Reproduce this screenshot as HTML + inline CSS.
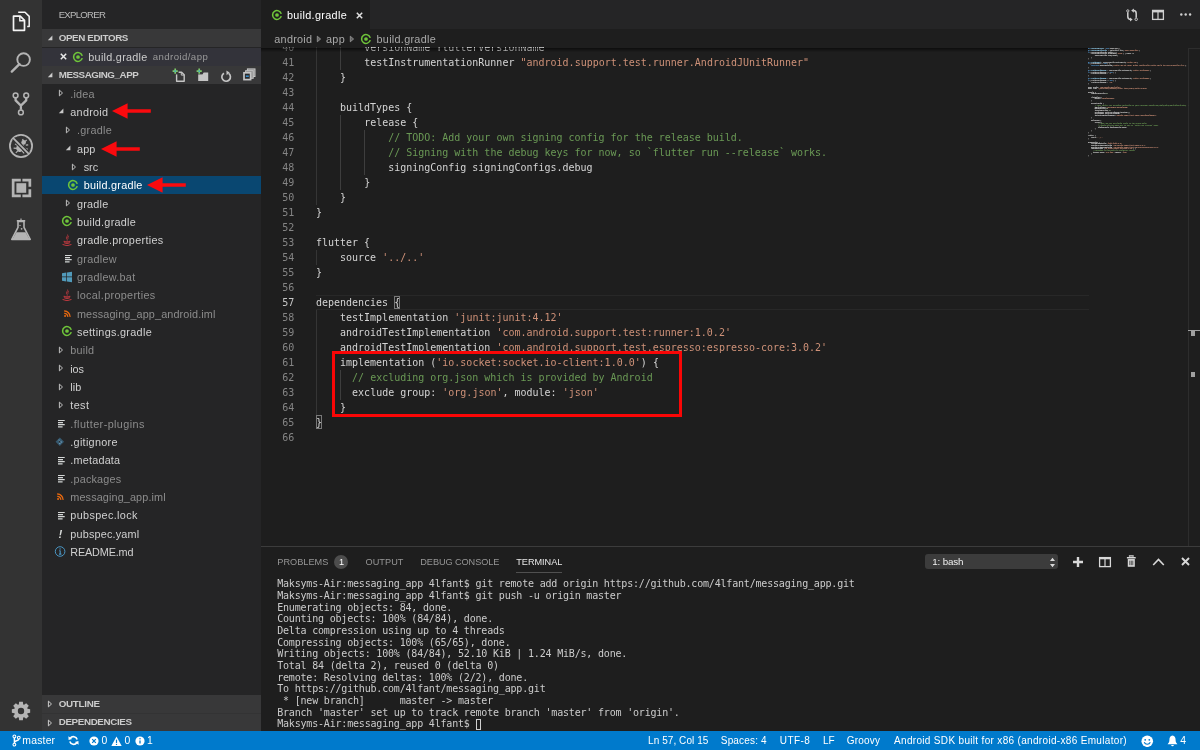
<!DOCTYPE html>
<html lang="en"><head><meta charset="utf-8"><title>build.gradle — messaging_app</title>
<style>
html,body{margin:0;padding:0;}
body{width:1200px;height:750px;overflow:hidden;background:#1e1e1e;position:relative;font-family:"Liberation Sans",sans-serif;}
#r{position:absolute;left:0;top:0;width:1200px;height:750px;overflow:hidden;will-change:transform;}
#r div,#r span,#r svg{position:absolute;}
#r span{white-space:pre;}
.mm{transform-origin:0 0;font-size:10px;line-height:12.04px;white-space:pre;color:#d4d4d4;font-weight:bold;-webkit-text-stroke:0.35px;width:730px;height:800px;overflow:hidden;}
.mm b{font-weight:bold;}
.m{font-family:"DejaVu Sans Mono","Liberation Mono",monospace;}
</style></head>
<body><div id="r">
<div style="left:0.00px;top:0.00px;width:41.67px;height:731.20px;background:#333333;"></div>
<div style="left:41.67px;top:0.00px;width:219.33px;height:731.20px;background:#252526;"></div>
<div style="left:261.00px;top:0.00px;width:939.00px;height:29.17px;background:#252526;"></div>
<div style="left:261.00px;top:0.00px;width:109.00px;height:29.17px;background:#1e1e1e;"></div>
<div style="left:0.00px;top:731.20px;width:1200.00px;height:18.80px;background:#007acc;"></div>
<span id="t1" style="left:58.70px;top:7.30px;line-height:16px;font-size:9.6px;color:#bbbbbb;letter-spacing:-0.719px;">EXPLORER</span>
<div style="left:41.67px;top:29.17px;width:219.33px;height:18.33px;background:#383839;"></div>
<div style="left:41.67px;top:47.50px;width:219.33px;height:18.33px;background:#33333a;"></div>
<div style="left:41.67px;top:65.83px;width:219.33px;height:18.33px;background:#383839;"></div>
<div style="left:41.67px;top:695.00px;width:219.33px;height:18.20px;background:#383839;"></div>
<div style="left:41.67px;top:713.20px;width:219.33px;height:18.00px;background:#383839;"></div>
<div style="left:41.67px;top:713.20px;width:219.33px;height:0.70px;background:#333334;"></div>
<svg style="left:47.00px;top:35.00px;" width="6" height="6" viewBox="0 0 6 6"><path d="M5.4 0.6V5.2H0.8Z" fill="#cccccc"/></svg>
<span id="t2" style="left:58.70px;top:30.30px;line-height:16px;font-size:9.8px;color:#cccccc;font-weight:bold;letter-spacing:-0.380px;">OPEN EDITORS</span>
<svg style="left:47.00px;top:71.60px;" width="6" height="6" viewBox="0 0 6 6"><path d="M5.4 0.6V5.2H0.8Z" fill="#cccccc"/></svg>
<span id="t3" style="left:58.70px;top:66.90px;line-height:16px;font-size:9.8px;color:#cccccc;font-weight:bold;letter-spacing:-0.451px;">MESSAGING_APP</span>
<svg style="left:46.80px;top:700.40px;" width="6" height="8" viewBox="0 0 6 8"><path d="M1.4 1.1L4.5 4L1.4 6.9Z" fill="none" stroke="#cccccc" stroke-width="1" stroke-linejoin="round"/></svg>
<span id="t4" style="left:58.70px;top:696.30px;line-height:16px;font-size:9.8px;color:#cccccc;font-weight:bold;letter-spacing:-0.286px;">OUTLINE</span>
<svg style="left:46.80px;top:718.60px;" width="6" height="8" viewBox="0 0 6 8"><path d="M1.4 1.1L4.5 4L1.4 6.9Z" fill="none" stroke="#cccccc" stroke-width="1" stroke-linejoin="round"/></svg>
<span id="t5" style="left:58.70px;top:714.00px;line-height:16px;font-size:9.8px;color:#cccccc;font-weight:bold;letter-spacing:-0.359px;">DEPENDENCIES</span>
<svg style="left:59.80px;top:53.20px;" width="7" height="7" viewBox="0 0 7 7"><path d="M0.8 0.8L6.2 6.2M6.2 0.8L0.8 6.2" stroke="#e8e8e8" stroke-width="1.5"/></svg>
<svg style="left:72.20px;top:50.60px;" width="12" height="12" viewBox="0 0 12 12"><path d="M10.25 4.86A4.4 4.4 0 1 0 10.25 7.14" fill="none" stroke="#6fc53a" stroke-width="1.55"/><circle cx="6" cy="6" r="1.85" fill="#6fc53a"/></svg>
<span id="t6" style="left:88.30px;top:48.90px;line-height:16px;font-size:10.83px;color:#ccc;letter-spacing:0.276px;">build.gradle</span>
<span id="t7" style="left:152.70px;top:48.90px;line-height:16px;font-size:9.6px;color:#9a9a9a;letter-spacing:0.438px;">android/app</span>
<svg style="left:172.40px;top:67.60px;" width="14" height="14" viewBox="0 0 14 14"><path d="M4.6 4.2H9.6L12.2 6.8V13.2H4.6Z" fill="none" stroke="#c5c5c5" stroke-width="1.4" stroke-linejoin="round"/><path d="M9.3 4.2V7.1H12.2" fill="none" stroke="#c5c5c5" stroke-width="1"/><rect x="0" y="0" width="6.6" height="6.4" fill="#383839"/><path d="M3.2 0.6V5.8M0.6 3.2H5.8" stroke="#7cc96a" stroke-width="1.7"/><rect x="2.5" y="2.5" width="1.4" height="1.4" fill="#3aa0d8"/></svg>
<svg style="left:195.90px;top:67.50px;" width="14" height="14" viewBox="0 0 14 14"><path d="M2.2 6.2H6.6L7.6 4.6H12.2V13H2.2Z" fill="#c5c5c5"/><rect x="0" y="0" width="6.4" height="6.2" fill="#383839"/><path d="M3.2 0.6V5.8M0.6 3.2H5.8" stroke="#7cc96a" stroke-width="1.7"/><rect x="2.5" y="2.5" width="1.4" height="1.4" fill="#3aa0d8"/></svg>
<svg style="left:219.00px;top:68.60px;" width="14" height="14" viewBox="0 0 14 14"><path d="M9.6 4.4A4.3 4.3 0 1 1 5.0 4.2" fill="none" stroke="#c5c5c5" stroke-width="1.7"/><path d="M7.4 1.4L10.6 3.6L7.6 6.2Z" fill="#c5c5c5"/></svg>
<svg style="left:242.20px;top:67.80px;" width="14" height="14" viewBox="0 0 14 14"><rect x="5.4" y="0.9" width="7.6" height="7.6" fill="#8e8e8e" stroke="#c5c5c5" stroke-width="1"/><rect x="3.6" y="2.7" width="7.6" height="7.6" fill="#8e8e8e" stroke="#c5c5c5" stroke-width="1"/><rect x="2.0" y="4.8" width="6.6" height="6.8" fill="#2a2a2b" stroke="#c5c5c5" stroke-width="1.7"/><path d="M3.8 8.2H6.8" stroke="#3aa0ea" stroke-width="1.3"/></svg>
<svg style="left:58.00px;top:89.34px;" width="6" height="8" viewBox="0 0 6 8"><path d="M1.4 1.1L4.5 4L1.4 6.9Z" fill="none" stroke="#c0c0c0" stroke-width="1" stroke-linejoin="round"/></svg>
<span id="t8" style="left:70.30px;top:85.69px;line-height:16px;font-size:10.83px;color:#8c8c8c;letter-spacing:0.203px;">.idea</span>
<svg style="left:58.00px;top:108.47px;" width="6" height="6" viewBox="0 0 6 6"><path d="M5.4 0.6V5.2H0.8Z" fill="#c8c8c8"/></svg>
<span id="t9" style="left:70.30px;top:104.02px;line-height:16px;font-size:10.83px;color:#d0d0d0;letter-spacing:0.268px;">android</span>
<svg style="left:64.67px;top:126.00px;" width="6" height="8" viewBox="0 0 6 8"><path d="M1.4 1.1L4.5 4L1.4 6.9Z" fill="none" stroke="#c0c0c0" stroke-width="1" stroke-linejoin="round"/></svg>
<span id="t10" style="left:76.97px;top:122.35px;line-height:16px;font-size:10.83px;color:#8c8c8c;letter-spacing:0.270px;">.gradle</span>
<svg style="left:64.67px;top:145.14px;" width="6" height="6" viewBox="0 0 6 6"><path d="M5.4 0.6V5.2H0.8Z" fill="#c8c8c8"/></svg>
<span id="t11" style="left:76.97px;top:140.69px;line-height:16px;font-size:10.83px;color:#d0d0d0;letter-spacing:0.141px;">app</span>
<svg style="left:71.33px;top:162.67px;" width="6" height="8" viewBox="0 0 6 8"><path d="M1.4 1.1L4.5 4L1.4 6.9Z" fill="none" stroke="#c0c0c0" stroke-width="1" stroke-linejoin="round"/></svg>
<span id="t12" style="left:83.63px;top:159.02px;line-height:16px;font-size:10.83px;color:#d0d0d0;letter-spacing:0.021px;">src</span>
<div style="left:41.67px;top:175.83px;width:219.33px;height:18.33px;background:#094771;"></div>
<svg style="left:67.33px;top:178.80px;" width="12" height="12" viewBox="0 0 12 12"><path d="M10.25 4.86A4.4 4.4 0 1 0 10.25 7.14" fill="none" stroke="#6fc53a" stroke-width="1.55"/><circle cx="6" cy="6" r="1.85" fill="#6fc53a"/></svg>
<span id="t13" style="left:83.63px;top:177.35px;line-height:16px;font-size:10.83px;color:#ffffff;letter-spacing:0.250px;">build.gradle</span>
<svg style="left:64.67px;top:199.33px;" width="6" height="8" viewBox="0 0 6 8"><path d="M1.4 1.1L4.5 4L1.4 6.9Z" fill="none" stroke="#c0c0c0" stroke-width="1" stroke-linejoin="round"/></svg>
<span id="t14" style="left:76.97px;top:195.68px;line-height:16px;font-size:10.83px;color:#d0d0d0;letter-spacing:0.232px;">gradle</span>
<svg style="left:60.67px;top:215.47px;" width="12" height="12" viewBox="0 0 12 12"><path d="M10.25 4.86A4.4 4.4 0 1 0 10.25 7.14" fill="none" stroke="#6fc53a" stroke-width="1.55"/><circle cx="6" cy="6" r="1.85" fill="#6fc53a"/></svg>
<span id="t15" style="left:76.97px;top:214.02px;line-height:16px;font-size:10.83px;color:#d0d0d0;letter-spacing:0.250px;">build.gradle</span>
<svg style="left:61.07px;top:234.00px;" width="12" height="12" viewBox="0 0 12 12"><path d="M6.6 0.6C7.6 2 4.6 2.9 5.6 4.6C6 5.4 6.6 5.6 6.2 6.6M7.9 2.4C6.4 3.2 6.6 4.2 7.2 4.8" fill="none" stroke="#b5383e" stroke-width="1"/><path d="M3 7.2C4.5 7.9 7.5 7.9 9 7.2M3.4 8.8C4.8 9.4 7.2 9.4 8.6 8.8M2 10.6C4 11.5 8 11.5 10 10.6" fill="none" stroke="#b5383e" stroke-width="1.1" stroke-linecap="round"/></svg>
<span id="t16" style="left:76.97px;top:232.35px;line-height:16px;font-size:10.83px;color:#d0d0d0;letter-spacing:0.308px;">gradle.properties</span>
<svg style="left:61.07px;top:252.33px;" width="12" height="12" viewBox="0 0 12 12"><path d="M4.0 3.5H10.7M4.0 5.6H9.0M4.0 7.7H10.7M4.0 9.8H8.6" stroke="#d4d7d6" stroke-width="1.2" fill="none"/></svg>
<span id="t17" style="left:76.97px;top:250.68px;line-height:16px;font-size:10.83px;color:#8c8c8c;letter-spacing:0.297px;">gradlew</span>
<svg style="left:61.07px;top:270.67px;" width="12" height="12" viewBox="0 0 12 12"><path d="M1 2.2L5.3 1.5V5.6H1ZM6 1.4L11 0.7V5.6H6ZM1 6.3H5.3V10.4L1 9.8ZM6 6.3H11V11.3L6 10.5Z" fill="#519aba"/></svg>
<span id="t18" style="left:76.97px;top:269.02px;line-height:16px;font-size:10.83px;color:#8c8c8c;letter-spacing:0.283px;">gradlew.bat</span>
<svg style="left:61.07px;top:289.00px;" width="12" height="12" viewBox="0 0 12 12"><path d="M6.6 0.6C7.6 2 4.6 2.9 5.6 4.6C6 5.4 6.6 5.6 6.2 6.6M7.9 2.4C6.4 3.2 6.6 4.2 7.2 4.8" fill="none" stroke="#b5383e" stroke-width="1"/><path d="M3 7.2C4.5 7.9 7.5 7.9 9 7.2M3.4 8.8C4.8 9.4 7.2 9.4 8.6 8.8M2 10.6C4 11.5 8 11.5 10 10.6" fill="none" stroke="#b5383e" stroke-width="1.1" stroke-linecap="round"/></svg>
<span id="t19" style="left:76.97px;top:287.35px;line-height:16px;font-size:10.83px;color:#8c8c8c;letter-spacing:0.316px;">local.properties</span>
<svg style="left:62.77px;top:309.73px;" width="8" height="8" viewBox="0 0 12 12"><circle cx="3.1" cy="9" r="1.5" fill="#e8690f"/><path d="M1.8 5.0A5 5 0 0 1 7.1 10.3M1.8 1.6A8.4 8.4 0 0 1 10.6 10.3" fill="none" stroke="#e8690f" stroke-width="2.1"/></svg>
<span id="t20" style="left:76.97px;top:305.68px;line-height:16px;font-size:10.83px;color:#8c8c8c;letter-spacing:0.122px;">messaging_app_android.iml</span>
<svg style="left:60.67px;top:325.47px;" width="12" height="12" viewBox="0 0 12 12"><path d="M10.25 4.86A4.4 4.4 0 1 0 10.25 7.14" fill="none" stroke="#6fc53a" stroke-width="1.55"/><circle cx="6" cy="6" r="1.85" fill="#6fc53a"/></svg>
<span id="t21" style="left:76.97px;top:324.02px;line-height:16px;font-size:10.83px;color:#d0d0d0;letter-spacing:0.304px;">settings.gradle</span>
<svg style="left:58.00px;top:346.00px;" width="6" height="8" viewBox="0 0 6 8"><path d="M1.4 1.1L4.5 4L1.4 6.9Z" fill="none" stroke="#c0c0c0" stroke-width="1" stroke-linejoin="round"/></svg>
<span id="t22" style="left:70.30px;top:342.35px;line-height:16px;font-size:10.83px;color:#8c8c8c;letter-spacing:0.222px;">build</span>
<svg style="left:58.00px;top:364.33px;" width="6" height="8" viewBox="0 0 6 8"><path d="M1.4 1.1L4.5 4L1.4 6.9Z" fill="none" stroke="#c0c0c0" stroke-width="1" stroke-linejoin="round"/></svg>
<span id="t23" style="left:70.30px;top:360.68px;line-height:16px;font-size:10.83px;color:#d0d0d0;letter-spacing:-0.115px;">ios</span>
<svg style="left:58.00px;top:382.66px;" width="6" height="8" viewBox="0 0 6 8"><path d="M1.4 1.1L4.5 4L1.4 6.9Z" fill="none" stroke="#c0c0c0" stroke-width="1" stroke-linejoin="round"/></svg>
<span id="t24" style="left:70.30px;top:379.01px;line-height:16px;font-size:10.83px;color:#d0d0d0;letter-spacing:0.052px;">lib</span>
<svg style="left:58.00px;top:401.00px;" width="6" height="8" viewBox="0 0 6 8"><path d="M1.4 1.1L4.5 4L1.4 6.9Z" fill="none" stroke="#c0c0c0" stroke-width="1" stroke-linejoin="round"/></svg>
<span id="t25" style="left:70.30px;top:397.35px;line-height:16px;font-size:10.83px;color:#d0d0d0;letter-spacing:0.383px;">test</span>
<svg style="left:54.40px;top:417.33px;" width="12" height="12" viewBox="0 0 12 12"><path d="M4.0 3.5H10.7M4.0 5.6H9.0M4.0 7.7H10.7M4.0 9.8H8.6" stroke="#d4d7d6" stroke-width="1.2" fill="none"/></svg>
<span id="t26" style="left:70.30px;top:415.68px;line-height:16px;font-size:10.83px;color:#8c8c8c;letter-spacing:0.405px;">.flutter-plugins</span>
<svg style="left:55.20px;top:436.86px;" width="9.6" height="9.6" viewBox="0 0 12 12"><path d="M6 0.7L11.3 6L6 11.3L0.7 6Z" fill="#36596f"/><path d="M4.2 4.2L7.6 7.6M6 5V8.4" stroke="#252526" stroke-width="0.9"/><circle cx="6" cy="8.2" r="1.0" fill="#6fa0c0"/><circle cx="7.6" cy="6.4" r="1.0" fill="#6fa0c0"/><circle cx="5" cy="3.9" r="0.9" fill="#6fa0c0"/></svg>
<span id="t27" style="left:70.30px;top:434.01px;line-height:16px;font-size:10.83px;color:#d0d0d0;letter-spacing:0.295px;">.gitignore</span>
<svg style="left:54.40px;top:454.00px;" width="12" height="12" viewBox="0 0 12 12"><path d="M4.0 3.5H10.7M4.0 5.6H9.0M4.0 7.7H10.7M4.0 9.8H8.6" stroke="#d4d7d6" stroke-width="1.2" fill="none"/></svg>
<span id="t28" style="left:70.30px;top:452.35px;line-height:16px;font-size:10.83px;color:#d0d0d0;letter-spacing:0.205px;">.metadata</span>
<svg style="left:54.40px;top:472.33px;" width="12" height="12" viewBox="0 0 12 12"><path d="M4.0 3.5H10.7M4.0 5.6H9.0M4.0 7.7H10.7M4.0 9.8H8.6" stroke="#d4d7d6" stroke-width="1.2" fill="none"/></svg>
<span id="t29" style="left:70.30px;top:470.68px;line-height:16px;font-size:10.83px;color:#8c8c8c;letter-spacing:0.181px;">.packages</span>
<svg style="left:56.10px;top:493.06px;" width="8" height="8" viewBox="0 0 12 12"><circle cx="3.1" cy="9" r="1.5" fill="#e8690f"/><path d="M1.8 5.0A5 5 0 0 1 7.1 10.3M1.8 1.6A8.4 8.4 0 0 1 10.6 10.3" fill="none" stroke="#e8690f" stroke-width="2.1"/></svg>
<span id="t30" style="left:70.30px;top:489.01px;line-height:16px;font-size:10.83px;color:#8c8c8c;letter-spacing:0.129px;">messaging_app.iml</span>
<svg style="left:54.40px;top:509.00px;" width="12" height="12" viewBox="0 0 12 12"><path d="M4.0 3.5H10.7M4.0 5.6H9.0M4.0 7.7H10.7M4.0 9.8H8.6" stroke="#d4d7d6" stroke-width="1.2" fill="none"/></svg>
<span id="t31" style="left:70.30px;top:507.35px;line-height:16px;font-size:10.83px;color:#d0d0d0;letter-spacing:0.358px;">pubspec.lock</span>
<span id="t32" style="left:58.40px;top:525.93px;line-height:16px;font-size:11.5px;color:#d4d7d6;font-weight:bold;font-style:italic;">!</span>
<span id="t33" style="left:70.30px;top:525.68px;line-height:16px;font-size:10.83px;color:#d0d0d0;letter-spacing:0.182px;">pubspec.yaml</span>
<svg style="left:53.90px;top:545.16px;" width="13" height="13" viewBox="0 0 13 13"><circle cx="6.1" cy="6.5" r="4.8" fill="none" stroke="#4a96c4" stroke-width="1"/><path d="M6.2 5.6V9.0M5.2 5.7H6.2M5.0 9.1H7.4" stroke="#4a96c4" stroke-width="1.1" fill="none"/><circle cx="6.1" cy="3.9" r="0.7" fill="#4a96c4"/></svg>
<span id="t34" style="left:70.30px;top:544.01px;line-height:16px;font-size:10.83px;color:#d0d0d0;letter-spacing:-0.153px;">README.md</span>
<svg style="left:10.00px;top:9.50px;" width="22" height="23" viewBox="0 0 22 23"><path d="M8.2 2.2H15L19.2 6.4V16.6H17.2" fill="none" stroke="#f4f4f4" stroke-width="1.5" stroke-linejoin="round"/><path d="M3.5 6.1H10.2L14.5 10.4V20.3H3.5Z" fill="none" stroke="#f4f4f4" stroke-width="1.7" stroke-linejoin="round"/><path d="M9.8 6.2V10.7H14.4" fill="none" stroke="#f4f4f4" stroke-width="1.4"/></svg>
<svg style="left:10.00px;top:51.00px;" width="22" height="23" viewBox="0 0 22 23"><circle cx="13.6" cy="8.6" r="6.3" fill="none" stroke="#b4b4b4" stroke-width="1.9"/><path d="M9.4 13.2L1.8 20.6" stroke="#b4b4b4" stroke-width="2.4" stroke-linecap="round"/></svg>
<svg style="left:11.00px;top:91.00px;" width="20" height="26" viewBox="0 0 20 26"><circle cx="4.6" cy="4.4" r="2.4" fill="none" stroke="#b4b4b4" stroke-width="1.5"/><circle cx="15.2" cy="4.4" r="2.4" fill="none" stroke="#b4b4b4" stroke-width="1.5"/><circle cx="9.9" cy="21.4" r="2.4" fill="none" stroke="#b4b4b4" stroke-width="1.5"/><path d="M4.6 7V9.4L9.9 14.6V18.8M15.2 7V9.4L9.9 14.6" fill="none" stroke="#b4b4b4" stroke-width="2.3" stroke-linejoin="round"/></svg>
<svg style="left:8.00px;top:133.00px;" width="26" height="26" viewBox="0 0 26 26"><circle cx="13" cy="13" r="11.1" fill="none" stroke="#b4b4b4" stroke-width="1.8"/><ellipse cx="12.2" cy="14.6" rx="3.7" ry="4.3" fill="#b4b4b4" transform="rotate(28 12.2 14.6)"/><circle cx="15.6" cy="9.4" r="2.3" fill="#b4b4b4"/><path d="M14.6 6L15.4 8M18.6 6.8L17.2 8.6M20.2 11.8L17.8 12.2M19.8 16.4L16.4 15M16.2 20.4L14.2 18M7 10.8L9.6 12.4M5.6 15.2L8.8 15.4M7.8 19.8L9.8 17.8" stroke="#b4b4b4" stroke-width="1.2" fill="none"/><path d="M5.6 5.6L20.4 20.4" stroke="#333333" stroke-width="4.2"/><path d="M5.2 5.2L20.8 20.8" stroke="#b4b4b4" stroke-width="1.8"/></svg>
<svg style="left:10.50px;top:177.50px;" width="21" height="20" viewBox="0 0 21 20"><path d="M9.8 0.8H0.8V19.2H9.8V16.5H3.5V3.5H9.8ZM11.4 0.8H20.2V8.8H17.5V3.5H11.4ZM11.4 19.2H20.2V11.2H17.5V16.5H11.4Z" fill="#b4b4b4"/><rect x="5.4" y="5.2" width="9.8" height="9.6" fill="#b4b4b4"/></svg>
<svg style="left:10.00px;top:217.50px;" width="22" height="24" viewBox="0 0 22 24"><path d="M8 3.4H14V9.4L20.2 21.4H1.8L8 9.4Z" fill="none" stroke="#b4b4b4" stroke-width="1.6" stroke-linejoin="round"/><path d="M6.4 14.2H15.6L19.4 21H2.6Z" fill="#b4b4b4"/><path d="M6.8 2.8H15.2" stroke="#b4b4b4" stroke-width="1.6"/><path d="M11 0.4V2" stroke="#b4b4b4" stroke-width="1.2"/><circle cx="11.6" cy="10.8" r="0.9" fill="#b4b4b4"/><circle cx="10" cy="7.4" r="0.7" fill="#b4b4b4"/></svg>
<svg style="left:9.70px;top:699.80px;" width="22" height="22" viewBox="0 0 22 22"><path fill-rule="evenodd" d="M20.16,9.14 L20.16,12.86 L17.57,13.18 L17.18,14.11 L18.79,16.17 L16.17,18.79 L14.11,17.18 L13.18,17.57 L12.86,20.16 L9.14,20.16 L8.82,17.57 L7.89,17.18 L5.83,18.79 L3.21,16.17 L4.82,14.11 L4.43,13.18 L1.84,12.86 L1.84,9.14 L4.43,8.82 L4.82,7.89 L3.21,5.83 L5.83,3.21 L7.89,4.82 L8.82,4.43 L9.14,1.84 L12.86,1.84 L13.18,4.43 L14.11,4.82 L16.17,3.21 L18.79,5.83 L17.18,7.89 L17.57,8.82Z M14.18,11A3.18,3.18 0 1 0 7.82,11A3.18,3.18 0 1 0 14.18,11Z" fill="#b4b4b4"/></svg>
<div style="left:316.00px;top:294.50px;width:772.70px;height:15.00px;background:transparent;box-sizing:border-box;border-top:1.4px solid #282828;border-bottom:1.4px solid #282828;"></div>
<div style="left:316.25px;top:39.50px;width:0.90px;height:15.00px;background:#353535;"></div>
<div style="left:340.31px;top:39.50px;width:0.90px;height:15.00px;background:#3e3e3e;"></div>
<span id="t35" class="m" style="right:905.70px;top:40.30px;line-height:15px;font-size:10px;color:#858585;">40</span>
<span id="t36" class="m" style="left:364.13px;top:40.30px;line-height:15px;font-size:9.993px;color:#d4d4d4;">versionName flutterVersionName</span>
<div style="left:316.25px;top:54.50px;width:0.90px;height:15.00px;background:#353535;"></div>
<div style="left:340.31px;top:54.50px;width:0.90px;height:15.00px;background:#3e3e3e;"></div>
<span id="t37" class="m" style="right:905.70px;top:55.30px;line-height:15px;font-size:10px;color:#858585;">41</span>
<span id="t38" class="m" style="left:364.13px;top:55.30px;line-height:15px;font-size:9.993px;color:#d4d4d4;">testInstrumentationRunner </span>
<span id="t39" class="m" style="left:520.54px;top:55.30px;line-height:15px;font-size:9.993px;color:#ce9178;">&quot;android.support.test.runner.AndroidJUnitRunner&quot;</span>
<div style="left:316.25px;top:69.50px;width:0.90px;height:15.00px;background:#353535;"></div>
<span id="t40" class="m" style="right:905.70px;top:70.30px;line-height:15px;font-size:10px;color:#858585;">42</span>
<span id="t41" class="m" style="left:340.06px;top:70.30px;line-height:15px;font-size:9.993px;color:#d4d4d4;">}</span>
<div style="left:316.25px;top:84.50px;width:0.90px;height:15.00px;background:#353535;"></div>
<span id="t42" class="m" style="right:905.70px;top:85.30px;line-height:15px;font-size:10px;color:#858585;">43</span>
<div style="left:316.25px;top:99.50px;width:0.90px;height:15.00px;background:#353535;"></div>
<span id="t43" class="m" style="right:905.70px;top:100.30px;line-height:15px;font-size:10px;color:#858585;">44</span>
<span id="t44" class="m" style="left:340.06px;top:100.30px;line-height:15px;font-size:9.993px;color:#d4d4d4;">buildTypes {</span>
<div style="left:316.25px;top:114.50px;width:0.90px;height:15.00px;background:#353535;"></div>
<div style="left:340.31px;top:114.50px;width:0.90px;height:15.00px;background:#3e3e3e;"></div>
<span id="t45" class="m" style="right:905.70px;top:115.30px;line-height:15px;font-size:10px;color:#858585;">45</span>
<span id="t46" class="m" style="left:364.13px;top:115.30px;line-height:15px;font-size:9.993px;color:#d4d4d4;">release {</span>
<div style="left:316.25px;top:129.50px;width:0.90px;height:15.00px;background:#353535;"></div>
<div style="left:340.31px;top:129.50px;width:0.90px;height:15.00px;background:#3e3e3e;"></div>
<div style="left:364.38px;top:129.50px;width:0.90px;height:15.00px;background:#3e3e3e;"></div>
<span id="t47" class="m" style="right:905.70px;top:130.30px;line-height:15px;font-size:10px;color:#858585;">46</span>
<span id="t48" class="m" style="left:388.19px;top:130.30px;line-height:15px;font-size:9.993px;color:#6a9955;">// TODO: Add your own signing config for the release build.</span>
<div style="left:316.25px;top:144.50px;width:0.90px;height:15.00px;background:#353535;"></div>
<div style="left:340.31px;top:144.50px;width:0.90px;height:15.00px;background:#3e3e3e;"></div>
<div style="left:364.38px;top:144.50px;width:0.90px;height:15.00px;background:#3e3e3e;"></div>
<span id="t49" class="m" style="right:905.70px;top:145.30px;line-height:15px;font-size:10px;color:#858585;">47</span>
<span id="t50" class="m" style="left:388.19px;top:145.30px;line-height:15px;font-size:9.993px;color:#6a9955;">// Signing with the debug keys for now, so `flutter run --release` works.</span>
<div style="left:316.25px;top:159.50px;width:0.90px;height:15.00px;background:#353535;"></div>
<div style="left:340.31px;top:159.50px;width:0.90px;height:15.00px;background:#3e3e3e;"></div>
<div style="left:364.38px;top:159.50px;width:0.90px;height:15.00px;background:#3e3e3e;"></div>
<span id="t51" class="m" style="right:905.70px;top:160.30px;line-height:15px;font-size:10px;color:#858585;">48</span>
<span id="t52" class="m" style="left:388.19px;top:160.30px;line-height:15px;font-size:9.993px;color:#d4d4d4;">signingConfig signingConfigs.debug</span>
<div style="left:316.25px;top:174.50px;width:0.90px;height:15.00px;background:#353535;"></div>
<div style="left:340.31px;top:174.50px;width:0.90px;height:15.00px;background:#3e3e3e;"></div>
<span id="t53" class="m" style="right:905.70px;top:175.30px;line-height:15px;font-size:10px;color:#858585;">49</span>
<span id="t54" class="m" style="left:364.13px;top:175.30px;line-height:15px;font-size:9.993px;color:#d4d4d4;">}</span>
<div style="left:316.25px;top:189.50px;width:0.90px;height:15.00px;background:#353535;"></div>
<span id="t55" class="m" style="right:905.70px;top:190.30px;line-height:15px;font-size:10px;color:#858585;">50</span>
<span id="t56" class="m" style="left:340.06px;top:190.30px;line-height:15px;font-size:9.993px;color:#d4d4d4;">}</span>
<span id="t57" class="m" style="right:905.70px;top:205.30px;line-height:15px;font-size:10px;color:#858585;">51</span>
<span id="t58" class="m" style="left:316.00px;top:205.30px;line-height:15px;font-size:9.993px;color:#d4d4d4;">}</span>
<span id="t59" class="m" style="right:905.70px;top:220.30px;line-height:15px;font-size:10px;color:#858585;">52</span>
<span id="t60" class="m" style="right:905.70px;top:235.30px;line-height:15px;font-size:10px;color:#858585;">53</span>
<span id="t61" class="m" style="left:316.00px;top:235.30px;line-height:15px;font-size:9.993px;color:#d4d4d4;">flutter {</span>
<div style="left:316.25px;top:249.50px;width:0.90px;height:15.00px;background:#353535;"></div>
<span id="t62" class="m" style="right:905.70px;top:250.30px;line-height:15px;font-size:10px;color:#858585;">54</span>
<span id="t63" class="m" style="left:340.06px;top:250.30px;line-height:15px;font-size:9.993px;color:#d4d4d4;">source </span>
<span id="t64" class="m" style="left:382.18px;top:250.30px;line-height:15px;font-size:9.993px;color:#ce9178;">&#x27;../..&#x27;</span>
<span id="t65" class="m" style="right:905.70px;top:265.30px;line-height:15px;font-size:10px;color:#858585;">55</span>
<span id="t66" class="m" style="left:316.00px;top:265.30px;line-height:15px;font-size:9.993px;color:#d4d4d4;">}</span>
<span id="t67" class="m" style="right:905.70px;top:280.30px;line-height:15px;font-size:10px;color:#858585;">56</span>
<span id="t68" class="m" style="right:905.70px;top:295.30px;line-height:15px;font-size:10px;color:#c6c6c6;">57</span>
<span id="t69" class="m" style="left:316.00px;top:295.30px;line-height:15px;font-size:9.993px;color:#d4d4d4;">dependencies {</span>
<div style="left:316.25px;top:309.50px;width:0.90px;height:15.00px;background:#353535;"></div>
<span id="t70" class="m" style="right:905.70px;top:310.30px;line-height:15px;font-size:10px;color:#858585;">58</span>
<span id="t71" class="m" style="left:340.06px;top:310.30px;line-height:15px;font-size:9.993px;color:#d4d4d4;">testImplementation </span>
<span id="t72" class="m" style="left:454.37px;top:310.30px;line-height:15px;font-size:9.993px;color:#ce9178;">&#x27;junit:junit:4.12&#x27;</span>
<div style="left:316.25px;top:324.50px;width:0.90px;height:15.00px;background:#353535;"></div>
<span id="t73" class="m" style="right:905.70px;top:325.30px;line-height:15px;font-size:10px;color:#858585;">59</span>
<span id="t74" class="m" style="left:340.06px;top:325.30px;line-height:15px;font-size:9.993px;color:#d4d4d4;">androidTestImplementation </span>
<span id="t75" class="m" style="left:496.48px;top:325.30px;line-height:15px;font-size:9.993px;color:#ce9178;">&#x27;com.android.support.test:runner:1.0.2&#x27;</span>
<div style="left:316.25px;top:339.50px;width:0.90px;height:15.00px;background:#353535;"></div>
<span id="t76" class="m" style="right:905.70px;top:340.30px;line-height:15px;font-size:10px;color:#858585;">60</span>
<span id="t77" class="m" style="left:340.06px;top:340.30px;line-height:15px;font-size:9.993px;color:#d4d4d4;">androidTestImplementation </span>
<span id="t78" class="m" style="left:496.48px;top:340.30px;line-height:15px;font-size:9.993px;color:#ce9178;">&#x27;com.android.support.test.espresso:espresso-core:3.0.2&#x27;</span>
<div style="left:316.25px;top:354.50px;width:0.90px;height:15.00px;background:#353535;"></div>
<span id="t79" class="m" style="right:905.70px;top:355.30px;line-height:15px;font-size:10px;color:#858585;">61</span>
<span id="t80" class="m" style="left:340.06px;top:355.30px;line-height:15px;font-size:9.993px;color:#d4d4d4;">implementation (</span>
<span id="t81" class="m" style="left:436.32px;top:355.30px;line-height:15px;font-size:9.993px;color:#ce9178;">&#x27;io.socket:socket.io-client:1.0.0&#x27;</span>
<span id="t82" class="m" style="left:640.86px;top:355.30px;line-height:15px;font-size:9.993px;color:#d4d4d4;">) {</span>
<div style="left:316.25px;top:369.50px;width:0.90px;height:15.00px;background:#353535;"></div>
<div style="left:340.31px;top:369.50px;width:0.90px;height:15.00px;background:#3e3e3e;"></div>
<span id="t83" class="m" style="right:905.70px;top:370.30px;line-height:15px;font-size:10px;color:#858585;">62</span>
<span id="t84" class="m" style="left:352.10px;top:370.30px;line-height:15px;font-size:9.993px;color:#6a9955;">// excluding org.json which is provided by Android</span>
<div style="left:316.25px;top:384.50px;width:0.90px;height:15.00px;background:#353535;"></div>
<div style="left:340.31px;top:384.50px;width:0.90px;height:15.00px;background:#3e3e3e;"></div>
<span id="t85" class="m" style="right:905.70px;top:385.30px;line-height:15px;font-size:10px;color:#858585;">63</span>
<span id="t86" class="m" style="left:352.10px;top:385.30px;line-height:15px;font-size:9.993px;color:#d4d4d4;">exclude group: </span>
<span id="t87" class="m" style="left:442.34px;top:385.30px;line-height:15px;font-size:9.993px;color:#ce9178;">&#x27;org.json&#x27;</span>
<span id="t88" class="m" style="left:502.50px;top:385.30px;line-height:15px;font-size:9.993px;color:#d4d4d4;">, module: </span>
<span id="t89" class="m" style="left:562.66px;top:385.30px;line-height:15px;font-size:9.993px;color:#ce9178;">&#x27;json&#x27;</span>
<div style="left:316.25px;top:399.50px;width:0.90px;height:15.00px;background:#353535;"></div>
<span id="t90" class="m" style="right:905.70px;top:400.30px;line-height:15px;font-size:10px;color:#858585;">64</span>
<span id="t91" class="m" style="left:340.06px;top:400.30px;line-height:15px;font-size:9.993px;color:#d4d4d4;">}</span>
<span id="t92" class="m" style="right:905.70px;top:415.30px;line-height:15px;font-size:10px;color:#858585;">65</span>
<span id="t93" class="m" style="left:316.00px;top:415.30px;line-height:15px;font-size:9.993px;color:#d4d4d4;">}</span>
<span id="t94" class="m" style="right:905.70px;top:430.30px;line-height:15px;font-size:10px;color:#858585;">66</span>
<div style="left:394.21px;top:295.90px;width:6.02px;height:13.40px;background:transparent;box-sizing:border-box;border:0.9px solid #787878;"></div>
<div style="left:316.00px;top:415.10px;width:6.02px;height:14.20px;background:transparent;box-sizing:border-box;border:0.9px solid #787878;"></div>
<div style="left:331.80px;top:351.30px;width:350.10px;height:65.40px;background:transparent;box-sizing:border-box;border:3.7px solid #fa0606;"></div>
<div style="left:261.00px;top:29.17px;width:939.00px;height:18.33px;background:#1e1e1e;"></div>
<div style="left:261.00px;top:47.50px;width:827.50px;height:4.50px;background:linear-gradient(rgba(0,0,0,0.55),rgba(0,0,0,0));"></div>
<div style="left:1188.20px;top:47.50px;width:0.80px;height:498.90px;background:#2d2d2d;"></div>
<div style="left:1188.20px;top:47.50px;width:12.00px;height:0.80px;background:#2d2d2d;"></div>
<div style="left:1188.20px;top:329.60px;width:12.00px;height:1.20px;background:#a0a0a0;"></div>
<div style="left:1190.60px;top:330.60px;width:4.20px;height:5.60px;background:#a0a0a0;"></div>
<div style="left:1190.60px;top:371.60px;width:4.20px;height:5.40px;background:#a0a0a0;"></div>
<svg style="left:271.00px;top:8.80px;" width="12" height="12" viewBox="0 0 12 12"><path d="M10.25 4.86A4.4 4.4 0 1 0 10.25 7.14" fill="none" stroke="#6fc53a" stroke-width="1.55"/><circle cx="6" cy="6" r="1.85" fill="#6fc53a"/></svg>
<span id="t95" style="left:287.00px;top:7.00px;line-height:16px;font-size:10.83px;color:#ffffff;letter-spacing:0.333px;">build.gradle</span>
<svg style="left:355.50px;top:11.50px;" width="7" height="7" viewBox="0 0 7 7"><path d="M0.8 0.8L6.2 6.2M6.2 0.8L0.8 6.2" stroke="#e0e0e0" stroke-width="1.5"/></svg>
<span id="t96" style="left:274.30px;top:31.20px;line-height:16px;font-size:10.83px;color:#a9a9a9;letter-spacing:0.268px;">android</span>
<svg style="left:316.30px;top:35.40px;" width="6" height="8" viewBox="0 0 6 8"><path d="M1.3 1.2L4.6 4L1.3 6.8Z" fill="#9a9a9a" fill-opacity="0.55" stroke="#9a9a9a" stroke-width="0.8" stroke-linejoin="round"/></svg>
<span id="t97" style="left:326.00px;top:31.20px;line-height:16px;font-size:10.83px;color:#a9a9a9;letter-spacing:0.307px;">app</span>
<svg style="left:349.00px;top:35.40px;" width="6" height="8" viewBox="0 0 6 8"><path d="M1.3 1.2L4.6 4L1.3 6.8Z" fill="#9a9a9a" fill-opacity="0.55" stroke="#9a9a9a" stroke-width="0.8" stroke-linejoin="round"/></svg>
<svg style="left:360.40px;top:32.80px;" width="12" height="12" viewBox="0 0 12 12"><path d="M10.25 4.86A4.4 4.4 0 1 0 10.25 7.14" fill="none" stroke="#6fc53a" stroke-width="1.55"/><circle cx="6" cy="6" r="1.85" fill="#6fc53a"/></svg>
<span id="t98" style="left:376.50px;top:31.20px;line-height:16px;font-size:10.83px;color:#a9a9a9;letter-spacing:0.292px;">build.gradle</span>
<svg style="left:1124.60px;top:7.60px;" width="14" height="14" viewBox="0 0 14 14"><circle cx="2.8" cy="2.9" r="1.15" fill="none" stroke="#d0d0d0" stroke-width="0.9"/><circle cx="11.2" cy="11.3" r="1.25" fill="none" stroke="#d0d0d0" stroke-width="0.9"/><path d="M2.8 4.2V8.6Q2.8 11.2 5.2 11.4" fill="none" stroke="#d0d0d0" stroke-width="1.5"/><path d="M5 9.4L7.6 11.5L5 13.6Z" fill="#d0d0d0"/><path d="M11.2 9.8V5.6Q11.2 2.6 8.6 2.6" fill="none" stroke="#d0d0d0" stroke-width="1.5"/><path d="M8.9 0.5L6.2 2.6L8.9 4.7Z" fill="#d0d0d0"/></svg>
<svg style="left:1151.00px;top:8.00px;" width="14" height="14" viewBox="0 0 14 14"><rect x="1.6" y="2.4" width="10.8" height="9" fill="none" stroke="#d0d0d0" stroke-width="1.3"/><path d="M1.6 3.4H12.4" stroke="#d0d0d0" stroke-width="2"/><path d="M7 3V11.4" stroke="#d0d0d0" stroke-width="1.2"/></svg>
<svg style="left:1178.80px;top:12.00px;" width="14" height="5" viewBox="0 0 14 5"><circle cx="2.3" cy="2.5" r="1.2" fill="#d0d0d0"/><circle cx="6.7" cy="2.5" r="1.2" fill="#d0d0d0"/><circle cx="11.1" cy="2.5" r="1.2" fill="#d0d0d0"/></svg>
<svg style="left:111.30px;top:102.00px" width="42" height="18" viewBox="0 0 42 18"><path d="M1 9L16.6 1.2999999999999998V7.2H39.8V10.8H16.6V16.7Z" fill="#fa0a0e"/></svg>
<svg style="left:100.20px;top:140.00px" width="42" height="18" viewBox="0 0 42 18"><path d="M1 9L16.6 1.2999999999999998V7.2H39.8V10.8H16.6V16.7Z" fill="#fa0a0e"/></svg>
<svg style="left:145.80px;top:176.00px" width="42" height="18" viewBox="0 0 42 18"><path d="M1 9L16.6 1.2999999999999998V7.2H39.8V10.8H16.6V16.7Z" fill="#fa0a0e"/></svg>
<div style="left:261.00px;top:545.90px;width:939.00px;height:1.00px;background:#3c3c3c;"></div>
<span id="t99" style="left:277.30px;top:554.00px;line-height:16px;font-size:9.17px;color:#969696;letter-spacing:0.014px;">PROBLEMS</span>
<div style="left:334.30px;top:555.30px;width:13.40px;height:13.40px;background:#4d4d4d;border-radius:7px;"></div>
<span id="t100" style="left:339.00px;top:554.20px;line-height:16px;font-size:9.2px;color:#ffffff;">1</span>
<span id="t101" style="left:365.50px;top:554.00px;line-height:16px;font-size:9.17px;color:#969696;letter-spacing:0.060px;">OUTPUT</span>
<span id="t102" style="left:420.30px;top:554.00px;line-height:16px;font-size:9.17px;color:#969696;letter-spacing:-0.069px;">DEBUG CONSOLE</span>
<span id="t103" style="left:516.30px;top:554.00px;line-height:16px;font-size:9.17px;color:#e7e7e7;letter-spacing:-0.037px;">TERMINAL</span>
<div style="left:516.30px;top:571.90px;width:46.00px;height:0.90px;background:#505050;"></div>
<div style="left:925.30px;top:554.40px;width:133.00px;height:14.50px;background:#3c3c3c;border-radius:3px;"></div>
<span id="t104" style="left:932.30px;top:554.00px;line-height:16px;font-size:9.8px;color:#f0f0f0;letter-spacing:-0.163px;">1: bash</span>
<svg style="left:1048.50px;top:556.60px;" width="7" height="11" viewBox="0 0 7 11"><path d="M3.5 0.8L6 4H1ZM3.5 10.2L6 7H1Z" fill="#d8d8d8"/></svg>
<svg style="left:1072.00px;top:555.90px;" width="12" height="12" viewBox="0 0 12 12"><path d="M6 1V11M1 6H11" stroke="#d8d8d8" stroke-width="2.4"/></svg>
<svg style="left:1098.00px;top:555.90px;" width="14" height="12" viewBox="0 0 14 12"><rect x="1.6" y="1.6" width="10.8" height="9" fill="none" stroke="#d8d8d8" stroke-width="1.3"/><path d="M1.6 2.4H12.4" stroke="#d8d8d8" stroke-width="1.8"/><path d="M7 2V10.4" stroke="#d8d8d8" stroke-width="1.2"/></svg>
<svg style="left:1125.60px;top:555.40px;" width="10.6" height="13.2" viewBox="0 0 12 15"><path d="M4 2V0.9H8V2M1 3.1H11" stroke="#d8d8d8" stroke-width="1.5" fill="none"/><path d="M2 4.6H10V13.4H2Z" fill="#d8d8d8"/><path d="M4.3 6.4V11.6M6 6.4V11.6M7.7 6.4V11.6" stroke="#1e1e1e" stroke-width="0.8"/></svg>
<svg style="left:1151.50px;top:556.80px;" width="13" height="10" viewBox="0 0 13 10"><path d="M1.2 8L6.5 2.4L11.8 8" fill="none" stroke="#d8d8d8" stroke-width="1.6"/></svg>
<svg style="left:1180.50px;top:557.30px;" width="9" height="9" viewBox="0 0 9 9"><path d="M1 1L8 8M8 1L1 8" stroke="#d8d8d8" stroke-width="1.9"/></svg>
<span id="t105" class="m" style="left:277.20px;top:578.33px;line-height:12px;font-size:10px;color:#cccccc;letter-spacing:-0.1872px;">Maksyms-Air:messaging_app 4lfant$ git remote add origin https://github.com/4lfant/messaging_app.git</span>
<span id="t106" class="m" style="left:277.20px;top:590.00px;line-height:12px;font-size:10px;color:#cccccc;letter-spacing:-0.1872px;">Maksyms-Air:messaging_app 4lfant$ git push -u origin master</span>
<span id="t107" class="m" style="left:277.20px;top:601.67px;line-height:12px;font-size:10px;color:#cccccc;letter-spacing:-0.1872px;">Enumerating objects: 84, done.</span>
<span id="t108" class="m" style="left:277.20px;top:613.33px;line-height:12px;font-size:10px;color:#cccccc;letter-spacing:-0.1872px;">Counting objects: 100% (84/84), done.</span>
<span id="t109" class="m" style="left:277.20px;top:625.00px;line-height:12px;font-size:10px;color:#cccccc;letter-spacing:-0.1872px;">Delta compression using up to 4 threads</span>
<span id="t110" class="m" style="left:277.20px;top:636.67px;line-height:12px;font-size:10px;color:#cccccc;letter-spacing:-0.1872px;">Compressing objects: 100% (65/65), done.</span>
<span id="t111" class="m" style="left:277.20px;top:648.33px;line-height:12px;font-size:10px;color:#cccccc;letter-spacing:-0.1872px;">Writing objects: 100% (84/84), 52.10 KiB | 1.24 MiB/s, done.</span>
<span id="t112" class="m" style="left:277.20px;top:660.00px;line-height:12px;font-size:10px;color:#cccccc;letter-spacing:-0.1872px;">Total 84 (delta 2), reused 0 (delta 0)</span>
<span id="t113" class="m" style="left:277.20px;top:671.67px;line-height:12px;font-size:10px;color:#cccccc;letter-spacing:-0.1872px;">remote: Resolving deltas: 100% (2/2), done.</span>
<span id="t114" class="m" style="left:277.20px;top:683.33px;line-height:12px;font-size:10px;color:#cccccc;letter-spacing:-0.1872px;">To https://github.com/4lfant/messaging_app.git</span>
<span id="t115" class="m" style="left:277.20px;top:695.00px;line-height:12px;font-size:10px;color:#cccccc;letter-spacing:-0.1872px;"> * [new branch]      master -&gt; master</span>
<span id="t116" class="m" style="left:277.20px;top:706.67px;line-height:12px;font-size:10px;color:#cccccc;letter-spacing:-0.1872px;">Branch &#x27;master&#x27; set up to track remote branch &#x27;master&#x27; from &#x27;origin&#x27;.</span>
<span id="t117" class="m" style="left:277.20px;top:718.33px;line-height:12px;font-size:10px;color:#cccccc;letter-spacing:-0.1872px;">Maksyms-Air:messaging_app 4lfant$ </span>
<div style="left:475.83px;top:718.50px;width:5.23px;height:11.07px;background:transparent;box-sizing:border-box;border:0.9px solid #d0d0d0;"></div>
<svg style="left:11.60px;top:734.30px;" width="9" height="13" viewBox="0 0 9 13"><circle cx="2.4" cy="2.4" r="1.4" fill="none" stroke="#ffffff" stroke-width="1.1"/><circle cx="2.4" cy="10.6" r="1.4" fill="none" stroke="#ffffff" stroke-width="1.1"/><circle cx="6.8" cy="3.6" r="1.4" fill="none" stroke="#ffffff" stroke-width="1.1"/><path d="M2.4 3.8V9.2M6.8 5C6.8 7.2 2.6 6.4 2.4 8.6" fill="none" stroke="#ffffff" stroke-width="1.5"/></svg>
<span id="t118" style="left:22.30px;top:732.90px;line-height:16px;font-size:10.4px;color:#ffffff;letter-spacing:0.206px;">master</span>
<svg style="left:67.50px;top:734.80px;" width="11" height="11" viewBox="0 0 11 11"><path d="M9.2 4.4A4 4 0 0 0 2.2 3.2M1.8 6.6A4 4 0 0 0 8.8 7.8" fill="none" stroke="#ffffff" stroke-width="1.6"/><path d="M0.4 1.2L0.6 5L4.2 3.9ZM10.6 9.8L10.4 6L6.8 7.1Z" fill="#ffffff"/></svg>
<svg style="left:88.50px;top:736.00px;" width="10" height="10" viewBox="0 0 10 10"><circle cx="5" cy="5" r="4.6" fill="#ffffff"/><path d="M3.2 3.2L6.8 6.8M6.8 3.2L3.2 6.8" stroke="#007acc" stroke-width="1.2"/></svg>
<span id="t119" style="left:101.50px;top:732.90px;line-height:16px;font-size:10.4px;color:#ffffff;">0</span>
<svg style="left:111.00px;top:735.50px;" width="11" height="10.5" viewBox="0 0 11 10.5"><path d="M5.5 0.5L10.7 10H0.3Z" fill="#ffffff"/><path d="M5.5 3.6V7" stroke="#007acc" stroke-width="1.2"/><circle cx="5.5" cy="8.4" r="0.7" fill="#007acc"/></svg>
<span id="t120" style="left:124.50px;top:732.90px;line-height:16px;font-size:10.4px;color:#ffffff;">0</span>
<svg style="left:134.50px;top:736.00px;" width="10" height="10" viewBox="0 0 10 10"><circle cx="5" cy="5" r="4.6" fill="#ffffff"/><path d="M5 4.4V7.6" stroke="#007acc" stroke-width="1.3"/><circle cx="5" cy="2.8" r="0.75" fill="#007acc"/></svg>
<span id="t121" style="left:147.00px;top:732.90px;line-height:16px;font-size:10.4px;color:#ffffff;">1</span>
<span id="t122" style="left:648.00px;top:732.90px;line-height:16px;font-size:10px;color:#ffffff;letter-spacing:0.077px;">Ln 57, Col 15</span>
<span id="t123" style="left:720.80px;top:732.90px;line-height:16px;font-size:10px;color:#ffffff;letter-spacing:0.168px;">Spaces: 4</span>
<span id="t124" style="left:779.80px;top:732.90px;line-height:16px;font-size:10px;color:#ffffff;letter-spacing:0.431px;">UTF-8</span>
<span id="t125" style="left:823.00px;top:732.90px;line-height:16px;font-size:10px;color:#ffffff;letter-spacing:-0.086px;">LF</span>
<span id="t126" style="left:846.70px;top:732.90px;line-height:16px;font-size:10px;color:#ffffff;letter-spacing:0.211px;">Groovy</span>
<span id="t127" style="left:894.00px;top:732.90px;line-height:16px;font-size:10px;color:#ffffff;letter-spacing:0.326px;">Android SDK built for x86 (android-x86 Emulator)</span>
<svg style="left:1141.00px;top:734.80px;" width="12.5" height="12.5" viewBox="0 0 12.5 12.5"><circle cx="6.25" cy="6.25" r="5.8" fill="#ffffff"/><circle cx="4.2" cy="4.8" r="0.9" fill="#007acc"/><circle cx="8.3" cy="4.8" r="0.9" fill="#007acc"/><path d="M3.2 7.2A3.3 3.3 0 0 0 9.3 7.2" fill="none" stroke="#007acc" stroke-width="1.1"/></svg>
<svg style="left:1166.50px;top:735.00px;" width="11" height="12" viewBox="0 0 11 12"><path d="M5.5 0.6C3.2 0.8 2.4 2.8 2.4 5C2.4 7.4 1.6 8 0.6 9.2H10.4C9.4 8 8.6 7.4 8.6 5C8.6 2.8 7.8 0.8 5.5 0.6Z" fill="#ffffff"/><path d="M4.2 10H6.8A1.3 1.3 0 0 1 4.2 10Z" fill="#ffffff"/></svg>
<span id="t128" style="left:1180.30px;top:732.90px;line-height:16px;font-size:10.4px;color:#ffffff;">4</span>
<div class="m mm" style="left:1088.4px;top:47.7px;transform:scale(0.13841);"><b style="color:#569cd6">def</b><b style="color:#9cdcfe"> localProperties</b> = <b style="color:#569cd6">new</b> Properties()
<b style="color:#569cd6">def</b><b style="color:#9cdcfe"> localPropertiesFile</b> = rootProject.file(<b style="color:#ce9178">&#x27;local.properties&#x27;</b>)
<b style="color:#569cd6">if</b> (localPropertiesFile.exists()) {
    localPropertiesFile.withReader(<b style="color:#ce9178">&#x27;UTF-8&#x27;</b>) { reader -&gt;
        localProperties.load(reader)
    }
}

<b style="color:#569cd6">def</b><b style="color:#9cdcfe"> flutterRoot</b> = localProperties.getProperty(<b style="color:#ce9178">&#x27;flutter.sdk&#x27;</b>)
<b style="color:#569cd6">if</b> (flutterRoot == <b style="color:#569cd6">null</b>) {
    <b style="color:#569cd6">throw</b> <b style="color:#569cd6">new</b> GradleException(<b style="color:#ce9178">&quot;Flutter SDK not found. Define location with flutter.sdk in the local.properties file.&quot;</b>)
}

<b style="color:#569cd6">def</b><b style="color:#9cdcfe"> flutterVersionCode</b> = localProperties.getProperty(<b style="color:#ce9178">&#x27;flutter.versionCode&#x27;</b>)
<b style="color:#569cd6">if</b> (flutterVersionCode == <b style="color:#569cd6">null</b>) {
    flutterVersionCode = <b style="color:#ce9178">&#x27;1&#x27;</b>
}

<b style="color:#569cd6">def</b><b style="color:#9cdcfe"> flutterVersionName</b> = localProperties.getProperty(<b style="color:#ce9178">&#x27;flutter.versionName&#x27;</b>)
<b style="color:#569cd6">if</b> (flutterVersionName == <b style="color:#569cd6">null</b>) {
    flutterVersionName = <b style="color:#ce9178">&#x27;1.0&#x27;</b>
}

apply plugin: <b style="color:#ce9178">&#x27;com.android.application&#x27;</b>
apply from: <b style="color:#ce9178">&quot;$flutterRoot/packages/flutter_tools/gradle/flutter.gradle&quot;</b>

android {
    compileSdkVersion <b style="color:#b5cea8">27</b>

    lintOptions {
        disable <b style="color:#ce9178">&#x27;InvalidPackage&#x27;</b>
    }

    defaultConfig {
        <b style="color:#6a9955">// TODO: Specify your own unique Application ID (docs: developer.android.com/studio/build/application-id.html)  .</b>
        applicationId <b style="color:#ce9178">&quot;com.example.messagingapp&quot;</b>
        minSdkVersion <b style="color:#b5cea8">16</b>
        targetSdkVersion <b style="color:#b5cea8">27</b>
        versionCode flutterVersionCode.toInteger()
        versionName flutterVersionName
        testInstrumentationRunner <b style="color:#ce9178">&quot;android.support.test.runner.AndroidJUnitRunner&quot;</b>
    }

    buildTypes {
        release {
            <b style="color:#6a9955">// TODO: Add your own signing config for the release build.</b>
            <b style="color:#6a9955">// Signing with the debug keys for now, so `flutter run --release` works.</b>
            signingConfig signingConfigs.debug
        }
    }
}

flutter {
    source <b style="color:#ce9178">&#x27;../..&#x27;</b>
}

dependencies {
    testImplementation <b style="color:#ce9178">&#x27;junit:junit:4.12&#x27;</b>
    androidTestImplementation <b style="color:#ce9178">&#x27;com.android.support.test:runner:1.0.2&#x27;</b>
    androidTestImplementation <b style="color:#ce9178">&#x27;com.android.support.test.espresso:espresso-core:3.0.2&#x27;</b>
    implementation (<b style="color:#ce9178">&#x27;io.socket:socket.io-client:1.0.0&#x27;</b>) {
      <b style="color:#6a9955">// excluding org.json which is provided by Android</b>
      exclude group: <b style="color:#ce9178">&#x27;org.json&#x27;</b>, module: <b style="color:#ce9178">&#x27;json&#x27;</b>
    }
}
</div>
</div></body></html>
